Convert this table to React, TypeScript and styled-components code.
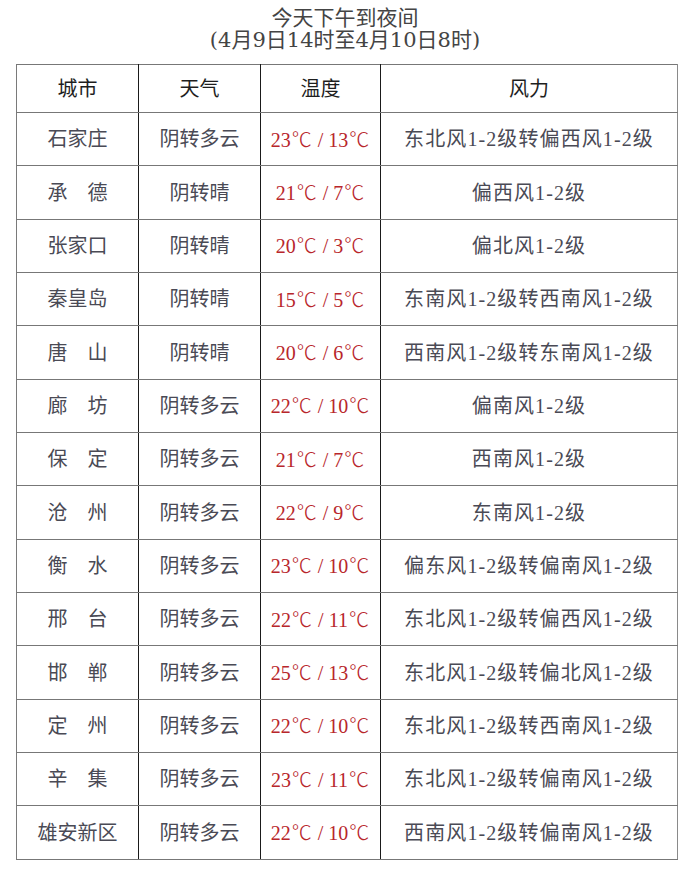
import React from "react";
import styled, { createGlobalStyle } from "styled-components";

const GlobalStyle = createGlobalStyle`
  body {
    margin: 0;
    background: #ffffff;
    font-family: "Liberation Serif", "Noto Sans CJK SC", serif;
  }
`;

const Page = styled.div`
  width: 690px;
  padding: 7px 0 20px;
  background: #ffffff;
`;

const Title = styled.div`
  text-align: center;
  font-family: "DejaVu Serif", "Noto Sans CJK SC", serif;
  font-size: 21px;
  line-height: 22px;
  color: #444;
  margin-bottom: 13px;
`;

const Table = styled.table`
  margin-left: 16px;
  width: 661px;
  border-collapse: collapse;
  table-layout: fixed;
  border-left: 1px solid #7a7a7a;
  border-right: 1px solid #8a8a8a;
  border-top: 1px solid #222;
  border-bottom: 1px solid #7a7a7a;
`;

const Row = styled.tr<{ $head?: boolean }>`
  height: ${(p) => (p.$head ? "48px" : "53.35px")};
`;

const Cell = styled.td<{ $head?: boolean; $red?: boolean; $wide?: boolean }>`
  padding: 0;
  text-align: center;
  vertical-align: middle;
  font-size: 20px;
  font-weight: normal;
  line-height: 24px;
  white-space: nowrap;
  letter-spacing: ${(p) => (p.$wide ? "1.1px" : "0")};
  color: ${(p) => (p.$head ? "#1e1e1e" : p.$red ? "#b8262b" : "#4a4a55")};
  border-top: 1px solid #777;
  border-bottom: 1px solid #777;
  border-right: 1px solid #1a1a1a;
  &:last-child {
    border-right: 1px solid #8a8a8a;
  }
`;

const Unit = styled.span`
  font-family: "Noto Sans CJK SC", sans-serif;
  font-weight: 300;
  padding: 0 1px;
`;

const Slash = styled.span`
  margin: 0 5px;
`;

const Col = styled.col<{ $w: number }>`
  width: ${(p) => p.$w}px;
`;

type Item = { city: string; weather: string; high: number; low: number; wind: string };

const rows: Item[] = [
  { city: "石家庄", weather: "阴转多云", high: 23, low: 13, wind: "东北风1-2级转偏西风1-2级" },
  { city: "承　德", weather: "阴转晴", high: 21, low: 7, wind: "偏西风1-2级" },
  { city: "张家口", weather: "阴转晴", high: 20, low: 3, wind: "偏北风1-2级" },
  { city: "秦皇岛", weather: "阴转晴", high: 15, low: 5, wind: "东南风1-2级转西南风1-2级" },
  { city: "唐　山", weather: "阴转晴", high: 20, low: 6, wind: "西南风1-2级转东南风1-2级" },
  { city: "廊　坊", weather: "阴转多云", high: 22, low: 10, wind: "偏南风1-2级" },
  { city: "保　定", weather: "阴转多云", high: 21, low: 7, wind: "西南风1-2级" },
  { city: "沧　州", weather: "阴转多云", high: 22, low: 9, wind: "东南风1-2级" },
  { city: "衡　水", weather: "阴转多云", high: 23, low: 10, wind: "偏东风1-2级转偏南风1-2级" },
  { city: "邢　台", weather: "阴转多云", high: 22, low: 11, wind: "东北风1-2级转偏西风1-2级" },
  { city: "邯　郸", weather: "阴转多云", high: 25, low: 13, wind: "东北风1-2级转偏北风1-2级" },
  { city: "定　州", weather: "阴转多云", high: 22, low: 10, wind: "东北风1-2级转西南风1-2级" },
  { city: "辛　集", weather: "阴转多云", high: 23, low: 11, wind: "东北风1-2级转偏南风1-2级" },
  { city: "雄安新区", weather: "阴转多云", high: 22, low: 10, wind: "西南风1-2级转偏南风1-2级" },
];

const App: React.FC = () => {
  return (
    <Page>
      <GlobalStyle />
      <Title>
        今天下午到夜间
        <br />
        (4月9日14时至4月10日8时)
      </Title>
      <Table>
        <colgroup>
          <Col $w={122} />
          <Col $w={122} />
          <Col $w={120} />
          <Col $w={297} />
        </colgroup>
        <thead>
          <Row $head>
            <Cell as="th" $head>城市</Cell>
            <Cell as="th" $head>天气</Cell>
            <Cell as="th" $head>温度</Cell>
            <Cell as="th" $head>风力</Cell>
          </Row>
        </thead>
        <tbody>
          {rows.map((r) => (
            <Row key={r.city}>
              <Cell>{r.city}</Cell>
              <Cell>{r.weather}</Cell>
              <Cell $red>
                {r.high}
                <Unit>℃</Unit>
                <Slash>/</Slash>
                {r.low}
                <Unit>℃</Unit>
              </Cell>
              <Cell $wide>{r.wind}</Cell>
            </Row>
          ))}
        </tbody>
      </Table>
    </Page>
  );
};

export default App;
